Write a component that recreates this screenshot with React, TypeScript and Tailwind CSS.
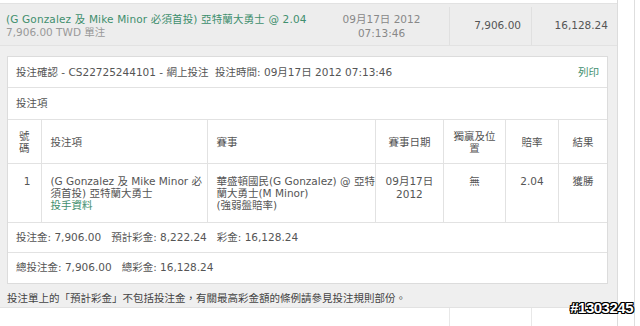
const font = "font-['DejaVu_Sans','Noto_Sans_CJK_TC',sans-serif]"

const head = ["號碼", "投注項", "賽事", "賽事日期", "獨贏及位置", "賠率", "結果"]
const widths = ["w-[33px]", "w-[166px]", "w-[166px]", "w-[68px]", "w-[62px]", "w-[53px]", ""]

export default function App() {
    return (
        <div className={`flex h-[326px] w-[640px] overflow-hidden bg-white text-[10.5px] text-[#555] ${font}`}>
            <div className="flex w-[618px] flex-col border-r border-[#dcdcdc]">
                <div className="mt-[3px] flex h-[45px] border-y border-[#e2e2e2] bg-[#ededed] pt-[3px]">
                    <div className="flex w-[314px] flex-col justify-center pl-[6px] leading-[13px]">
                        <div className="tracking-[0.15px] text-[#3f8f6e]">(G Gonzalez 及 Mike Minor 必須首投) 亞特蘭大勇士 @ 2.04</div>
                        <div className="text-[#999]">7,906.00 TWD 單注</div>
                    </div>
                    <div className="flex w-[135px] flex-col items-center justify-center leading-[14px] text-[#888]">
                        <div>09月17日 2012</div>
                        <div>07:13:46</div>
                    </div>
                    <div className="flex w-[82px] items-center justify-end border-l border-[#e0e0e0] pr-[10px]">7,906.00</div>
                    <div className="flex flex-1 items-center justify-end border-l border-[#e0e0e0] pr-[9px]">16,128.24</div>
                </div>

                <div className="flex flex-1 flex-col bg-[#efefef] pl-[7px] pr-[9px] pt-[10px]">
                    <div className="border border-[#dcdcdc] bg-white">
                        <div className="flex h-[31px] items-center justify-between border-b border-[#e2e2e2] pl-[8px] pr-[8px]">
                            <span className="whitespace-pre">投注確認 - CS22725244101 - 網上投注  投注時間: 09月17日 2012 07:13:46</span>
                            <span className="text-[#3f8f6e]">列印</span>
                        </div>
                        <div className="flex h-[31px] items-center pl-[8px]">投注項</div>
                        <table className="w-full border-collapse">
                            <thead>
                                <tr className="h-[44px] border-y border-[#e2e2e2] leading-[12px]">
                                    {head.map((h, i) => (
                                        <th
                                            key={h}
                                            className={`border-l border-[#e2e2e2] font-normal first:border-l-0 ${
                                                i === 1 || i === 2 ? "pl-[9px] text-left" : "px-[8px] text-center"
                                            } ${widths[i]}`}
                                        >
                                            {h}
                                        </th>
                                    ))}
                                </tr>
                            </thead>
                            <tbody>
                                <tr className="h-[58px] align-top leading-[12px]">
                                    <td className="pr-[10px] pt-[11px] text-right">1</td>
                                    <td className="whitespace-nowrap border-l border-[#e2e2e2] pl-[9px] pt-[11px]">
                                        (G Gonzalez 及 Mike Minor 必<br />須首投) 亞特蘭大勇士
                                        <br />
                                        <span className="text-[#3f8f6e]">投手資料</span>
                                    </td>
                                    <td className="whitespace-nowrap border-l border-[#e2e2e2] pl-[9px] pt-[11px]">
                                        華盛頓國民(G Gonzalez) @ 亞特<br />蘭大勇士(M Minor)
                                        <br />
                                        (強弱盤賠率)
                                    </td>
                                    <td className="border-l border-[#e2e2e2] pt-[11px] text-center leading-[13px]">
                                        09月17日<br />2012
                                    </td>
                                    <td className="border-l border-[#e2e2e2] pt-[11px] text-center">無</td>
                                    <td className="border-l border-[#e2e2e2] pt-[11px] text-center">2.04</td>
                                    <td className="border-l border-[#e2e2e2] pt-[11px] text-center">獲勝</td>
                                </tr>
                            </tbody>
                        </table>
                        <div className="flex h-[31px] items-center whitespace-pre border-y border-[#e2e2e2] pl-[8px]">
                            投注金: 7,906.00   預計彩金: 8,222.24   彩金: 16,128.24
                        </div>
                        <div className="flex h-[30px] items-center whitespace-pre pl-[8px]">總投注金: 7,906.00   總彩金: 16,128.24</div>
                    </div>
                    <div className="mt-[7px] text-[10.5px] text-[#444]">
                        投注單上的「預計彩金」不包括投注金，有關最高彩金額的條例請參見投注規則部份。
                    </div>
                </div>

                <div className="flex h-[20px] border-t border-[#e2e2e2] bg-white">
                    <div className="w-[449px]" />
                    <div className="w-[82px] border-l border-[#e8e8e8]" />
                    <div className="flex-1 border-l border-[#e8e8e8]" />
                </div>
            </div>
            <div className="w-[16px]" />
            <div className="w-px bg-[#dedede]" />
            <div className="relative flex-1">
                <span className="absolute bottom-[7px] right-[7px] whitespace-nowrap font-['Liberation_Sans',sans-serif] text-[15px] font-bold tracking-[-0.5px] text-white [text-shadow:1px_0_0_#000,-1px_0_0_#000,0_1px_0_#000,0_-1px_0_#000,1px_1px_0_#000,-1px_-1px_0_#000,1px_-1px_0_#000,-1px_1px_0_#000]">
                    #1303245
                </span>
            </div>
        </div>
    )
}
